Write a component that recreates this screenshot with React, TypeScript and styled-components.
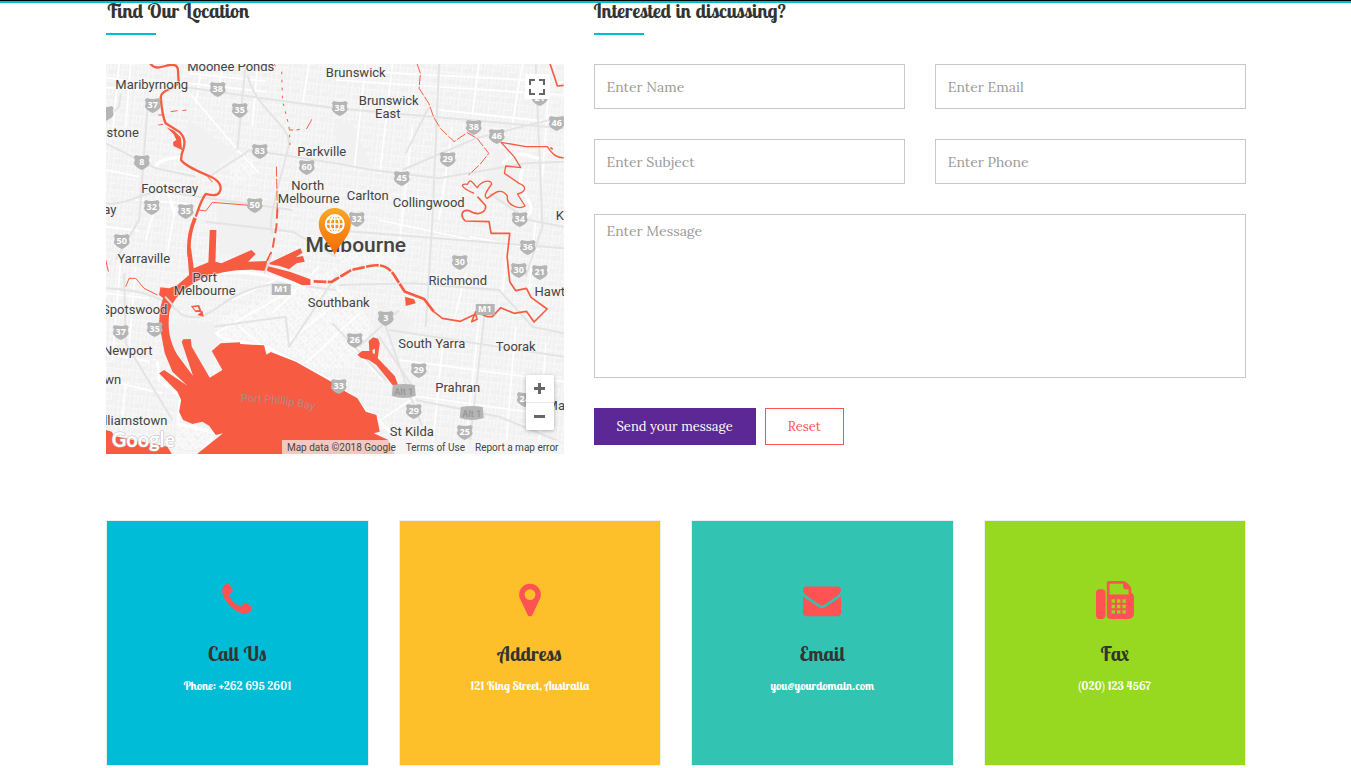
import React from "react";
import styled, { createGlobalStyle } from "styled-components";

const script = '"Lobster Two", Lobster, "Liberation Serif", serif';
const serif = 'Lora, "Liberation Serif", serif';

const GlobalStyle = createGlobalStyle`
  *, *::before, *::after { box-sizing: border-box; }
  body { margin: 0; background: #fff; color: #333; font-family: ${serif}; font-size: 14px; }
`;

const TopLine = styled.header`
  position: fixed;
  top: 0;
  left: 0;
  right: 0;
  z-index: 10;
  height: 3px;
  background: #00bcd7;
  border-top: 1px solid #000;
`;
const Container = styled.main`
  max-width: 1171px;
  margin: 0 auto;
  padding-left: 1px;
`;
const Row = styled.div`
  display: flex;
  flex-wrap: wrap;
`;
const Column = styled.section<{ $span: number }>`
  flex: 0 0 ${(p) => (p.$span * 100) / 12}%;
  min-width: 0;
  padding: 0 15px;
`;
const Title = styled.h2`
  margin: 0 0 29px;
  font: 700 20px/22px ${script};
  color: #333;
  white-space: nowrap;
  &::after {
    content: "";
    display: block;
    width: 50px;
    height: 2px;
    margin-top: 11px;
    background: #00bcd7;
  }
`;

/* Form */
const Form = styled.form`
  display: grid;
  grid-template-columns: 1fr 1fr;
  gap: 30px;
`;
const Label = styled.label<{ $wide?: boolean }>`
  display: block;
  min-width: 0;
  ${(p) => p.$wide && "grid-column: 1 / -1;"}
`;
const Hidden = styled.span`
  position: absolute;
  width: 1px;
  height: 1px;
  overflow: hidden;
  clip-path: inset(50%);
`;
const Input = styled.input`
  display: block;
  width: 100%;
  height: 45px;
  padding: 6px 12px;
  border: 1px solid #c8c8c8;
  border-radius: 0;
  font: 14px/20px ${serif};
  color: #333;
  &::placeholder { color: #999; opacity: 1; }
`;
const Message = styled(Input)`
  height: 164px;
  resize: none;
`;
const Actions = styled.div`
  grid-column: 1 / -1;
  display: flex;
  gap: 9px;
`;
const Button = styled.button<{ $outline?: boolean }>`
  height: 37px;
  padding: 0 22px;
  border: 1px solid ${(p) => (p.$outline ? "#ff5252" : "#5c2896")};
  background: ${(p) => (p.$outline ? "#fff" : "#5c2896")};
  color: ${(p) => (p.$outline ? "#ff5252" : "#fff")};
  font: 13px/20px ${serif};
  cursor: pointer;
`;

/* Contact cards */
const Cards = styled(Row)`
  margin-top: 66px;
  padding-bottom: 2px;
`;
const Card = styled.article<{ $color: string }>`
  display: flex;
  flex-direction: column;
  align-items: center;
  height: 246px;
  padding-top: 60px;
  border: 1px solid #eee;
  background: ${(p) => p.$color};
  text-align: center;
`;
const CardIcon = styled.svg`
  width: 38px;
  height: 38px;
  fill: #ff5252;
`;
const CardTitle = styled.h3`
  margin: 24px 0 10px;
  font: 700 20px/22px ${script};
  color: #333;
`;
const CardText = styled.p`
  margin: 0;
  font: 700 12px/22px ${script};
  color: #fff;
`;

/* Map */
const MapBox = styled.div`
  position: relative;
  height: 390px;
  overflow: hidden;
  background: #f2f2f2;
  font-family: Roboto, sans-serif;
`;
const MapSvg = styled.svg`
  display: block;
  width: 100%;
  height: 100%;
  font-family: Roboto, sans-serif;
`;
const MapButton = styled.button`
  display: flex;
  align-items: center;
  justify-content: center;
  width: 100%;
  padding: 0;
  border: 0;
  background: #fff;
  cursor: pointer;
`;
const Fullscreen = styled.div`
  position: absolute;
  top: 10px;
  right: 14px;
  width: 25px;
  ${MapButton} { height: 25px; }
`;
const Zoom = styled.div`
  position: absolute;
  right: 10px;
  bottom: 24px;
  width: 28px;
  border-radius: 2px;
  overflow: hidden;
  box-shadow: 0 1px 4px rgba(0, 0, 0, 0.3);
  ${MapButton} { height: 27px; }
  ${MapButton} + ${MapButton} { height: 28px; border-top: 1px solid #e6e6e6; }
`;
const Credits = styled.div`
  position: absolute;
  right: 0;
  bottom: 0;
  display: flex;
  gap: 10px;
  height: 14px;
  padding: 0 5px;
  background: rgba(245, 245, 245, 0.7);
  color: #444;
  font-size: 10px;
  line-height: 15px;
  white-space: nowrap;
  a { color: #444; text-decoration: none; }
`;

const WATER = "#f75c43";

type Place = [string, number, number];
const places: Place[] = [
  ["Moonee Ponds", 125, 7], ["Maribyrnong", 46, 25], ["Brunswick", 250, 13],
  ["Brunswick", 283, 41], ["East", 282, 54], ["stone", 17, 73], ["Parkville", 216, 92],
  ["Footscray", 64, 129], ["North", 202, 126], ["Melbourne", 203, 139],
  ["Carlton", 262, 136], ["Collingwood", 323, 143], ["ay", 4, 150], ["Yarraville", 38, 199],
  ["Port", 99, 218], ["Melbourne", 99, 231], ["Richmond", 352, 221], ["Southbank", 233, 243],
  ["Spotswood", 29, 250], ["Newport", 22, 291], ["wn", 7, 320], ["South Yarra", 326, 284],
  ["Toorak", 410, 287], ["Prahran", 352, 328], ["St Kilda", 306, 372], ["K", 454, 156],
  ["lliamstown", 30, 361], ["Hawt", 444, 232], ["Ma", 450, 346],
];
const shields: Place[] = [
  ["37", 47, 41], ["38", 112, 25], ["35", 134, 46], ["83", 154, 87], ["8", 36, 98],
  ["32", 46, 143], ["35", 80, 147], ["50", 149, 141], ["50", 16, 177], ["60", 201, 103],
  ["38", 234, 44], ["38", 368, 63], ["46", 391, 72], ["46", 451, 59], ["29", 342, 95],
  ["45", 296, 114], ["32", 251, 155], ["34", 414, 155], ["36", 422, 183], ["30", 354, 198],
  ["30", 413, 206], ["21", 434, 208], ["37", 15, 268], ["35", 49, 265], ["26", 249, 276],
  ["3", 280, 254], ["33", 233, 322], ["29", 313, 306], ["29", 308, 347], ["25", 359, 368],
  ["21", 434, 34], ["24", 419, 335], ["", 0, 49],
];
const plates: Place[] = [["M1", 175, 225], ["M1", 379, 245]];
const altPlates: Place[] = [["Alt 1", 298, 327], ["Alt 1", 366, 349]];

const minorRoads =
  "M0 52 L110 70 L240 80 M0 82 L120 88 M250 70 L480 95 M250 40 L480 64 M690 60 L1374 105 M690 30 L1374 66 M1000 150 L1374 190" +
  " M40 12 L20 230 M75 12 L60 200 M285 40 L270 130 M350 12 L340 90 M455 20 L440 200 M610 12 L590 130" +
  " M780 12 L745 330 M860 12 L822 340 M920 200 L880 560 M1120 12 L1100 160 M1250 12 L1220 190 M1330 80 L1310 350" +
  " M240 85 L400 275 L460 340 M0 330 L100 350 M90 420 L240 430 M160 400 L120 540 M0 500 L100 512 M210 440 L180 600" +
  " M1040 200 L1000 480 M1090 530 L1300 570 M1210 520 L1190 700 M1290 480 L1270 690 M820 480 L1100 540" +
  " M0 700 L130 715 M45 600 L20 900 M90 620 L70 860 M0 880 L130 905 M0 960 L170 1000 M60 970 L40 1170" +
  " M330 820 L560 690 M400 800 L640 1000 M500 760 L640 620 M540 850 L690 730 M600 910 L760 760 M380 720 L550 640" +
  " M880 900 L1374 965 M870 1000 L1300 1060 M1010 860 L980 1160 M1120 780 L1080 1150 M1230 800 L1200 1160 M1320 850 L1300 1160" +
  " M930 1010 L780 1110 M830 960 L720 840 M1080 640 L1040 800";
const majorRoads =
  "M0 175 L40 140 L45 100 M240 82 L690 145 L1374 205 M420 12 L395 270 M405 290 L430 270 L690 310 L800 330 L1000 355 L1260 310 L1374 305" +
  " M425 45 C450 150 550 190 550 250 C540 310 480 480 500 520 M0 250 L150 325 L270 350 M310 350 L410 285 M125 150 L100 480 L30 600" +
  " M0 430 C80 440 120 370 240 405 L560 450 M300 485 L560 515 L690 590 M680 510 L1374 565 M1000 12 L980 480 L960 800" +
  " M970 140 L900 280 M890 330 L1110 235 L1290 190 L1374 170 M1150 400 L1270 480 L1374 500 M1290 12 L1310 500 L1260 650" +
  " M0 685 C130 690 180 720 230 765 C330 800 330 690 520 670 L690 690 M700 675 L920 670 L1180 690 L1280 800 L1374 820" +
  " M55 640 L60 850 L200 1080 M325 800 L540 770 L550 860 L690 650 M830 770 L910 1000 L950 1100 M850 810 L1374 890" +
  " M930 1020 L1180 1070 L1374 1150 M840 960 L680 790 M760 860 L880 750 M1140 730 L1090 1170 M820 830 L920 980";

const globe = "M0 -9 V9 M-9 0 H9 M-7 -5 H7 M-7 5 H7 M0 -9 C-6 -5 -6 5 0 9 C6 5 6 -5 0 -9";

function CityMap() {
  return (
    <MapBox>
      <MapSvg viewBox="0 0 458 390" preserveAspectRatio="xMidYMid slice" role="img" aria-label="Map of Melbourne">
        <defs>
          <pattern id="blocks" width="46" height="38" patternUnits="userSpaceOnUse" patternTransform="rotate(6)">
            <path d="M0 5H46 M0 24H30 M8 0V38 M30 0V24 M40 5V38 M18 5V24" fill="none" stroke="#fafafa" strokeWidth="3" />
          </pattern>
          <pattern id="slant" width="30" height="26" patternUnits="userSpaceOnUse" patternTransform="rotate(-38)">
            <path d="M0 5H30 M8 0V26 M20 5V26 M0 17H20" fill="none" stroke="#fcfcfc" strokeWidth="3" />
          </pattern>
          <linearGradient id="pin" x1="0" y1="0" x2="0" y2="1">
            <stop offset="0" stopColor="#f9a72b" />
            <stop offset="1" stopColor="#f56a00" />
          </linearGradient>
        </defs>
        <rect width="458" height="390" fill="#f1f1f1" />

        <g transform="translate(0 -4) scale(0.33333)" fill="none" strokeLinejoin="round">
          <rect y="0" width="1374" height="1200" fill="url(#blocks)" />
          <path fill="#f1f1f1" d="M250 180 L390 275 L300 345 L235 300z M330 415 L520 450 L480 600 L340 580z M190 790 L320 790 L340 850 L300 940 L200 860z M684 190 L740 190 L800 320 L700 310z M1170 260 L1240 330 L1250 440 L1130 400z M820 730 L930 780 L880 850 L800 800z" />
          <path fill="url(#slant)" d="M350 770 L690 620 L800 800 L740 920 L640 930 L480 850 L345 840z M700 530 L880 560 L870 610 L700 610z M220 1070 L320 1110 L280 1170 L210 1170z M360 300 L440 290 L450 350 L380 370z" />
          <path stroke="#fff" strokeWidth="5" d={minorRoads} />
          <path stroke="#e4e4e4" strokeWidth="6" d={majorRoads} />
          <path stroke="#fff" strokeWidth="9" d="M265 660 C340 630 440 620 600 685 M330 815 C350 850 400 840 480 860 L690 970 L860 1120 M205 460 L190 400 M150 320 C160 290 210 300 235 285 M155 905 L160 960 L225 1010 L215 1090 L330 1120 L290 1170 M1190 310 C1250 260 1260 290 1300 295 M1250 330 C1220 400 1310 430 1260 470" />

          <g fill={WATER}>
            <path d="M244 565 L256 565 L264 625 L308 607 L312 510 L332 510 L329 605 L347 610 L437 570 L450 582 L427 605 L484 603 L480 633 C420 624 340 632 280 660 C235 685 195 720 190 765 C185 815 195 850 215 885 L262 948 L228 846 L232 838 L255 837 L258 860 L312 953 L350 930 L318 873 L345 850 L402 847 L404 852 L475 856 L482 884 L495 876 L570 905 L690 973 L720 995 L755 1015 L780 1055 L812 1065 L822 1115 L804 1120 L848 1140 L868 1185 L270 1185 L352 1120 L330 1125 L310 1097 L290 1085 L260 1092 L232 1080 L220 1055 L226 1020 L215 995 L160 940 L175 930 L245 977 L200 935 L177 880 L160 790 L163 745 L172 715 L160 705 L164 682 L190 685 L215 675 L250 645z" />
            <path d="M492 608 L584 565 L590 578 L570 592 L592 588 L597 605 L572 610 L550 628 L522 618 L490 613z M484 618 L552 635 L614 658 L614 675 L587 675 L567 665 L484 633z" />
            <path d="M0 1110 L18 1115 L25 1128 L185 1160 L200 1185 L0 1185z" />
            <path d="M182 202 L205 212 L225 232 L229 270 L203 258 L202 246 L212 240 L203 222z" />
            <path d="M789 843 L802 832 L817 836 L822 850 L816 895 L867 948 L877 975 L861 976 L812 915 L788 899 L766 894 L755 884 L769 873 L791 873z" />
            <path d="M255 738 L280 735 L288 755 L270 757z M275 765 L290 752 L294 770z M898 710 L925 718 L930 730 L900 738z" />
          </g>
          <path fill="#f1f1f1" d="M800 870 L808 866 L807 882 L801 880z M262 742 L276 740 L280 750 L269 751z" />

          <g stroke={WATER}>
            <path strokeWidth="7" d="M132 8 C145 30 165 22 185 16 C215 10 218 22 217 40 L219 68 C200 90 165 90 165 112 C168 150 172 175 180 190 L220 215 C242 235 238 255 228 282 L226 300 C240 320 280 335 310 348 C340 360 350 380 342 395 C335 410 315 405 300 402 C285 420 278 450 270 470" />
            <path strokeWidth="11" d="M268 474 C253 510 246 550 251 590" />
            <path strokeWidth="8" d="M624 664 L677 666 L712 645 L737 630 L792 618 C835 610 850 625 865 645 L898 697" strokeDasharray="38 4" />
            <path strokeWidth="8" d="M898 695 L955 717 L984 755" />
            <path strokeWidth="5" d="M984 755 L1010 775 L1064 784 L1110 762 L1114 778 L1098 785 L1110 755 L1145 770 L1160 770 L1185 743 L1225 760 L1262 754 L1285 786 L1324 747 L1276 712 L1262 685 L1230 692 L1212 665 L1204 590 L1212 520 L1156 520 L1150 485 L1079 483 C1060 465 1070 448 1090 452 C1130 475 1145 445 1138 435 L1115 410" />
            <path strokeWidth="4" d="M1105 400 C1060 380 1065 370 1085 373 C1095 350 1100 370 1115 383 C1125 365 1155 355 1158 372 C1145 390 1130 410 1145 415 C1165 400 1185 380 1205 408 C1200 435 1240 450 1258 438 L1235 402 C1260 395 1265 380 1240 370 L1196 340 L1200 318 L1245 323 L1225 290 L1186 247 L1260 260 L1325 260 C1340 285 1355 295 1374 293" />
            <path strokeWidth="3" strokeDasharray="30 5" d="M934 12 L944 40 L940 85 L969 130 L984 172 L1004 205 L1045 245 L1084 218 L1114 235 L1149 280 L1124 312 L1089 345" />
            <path strokeWidth="3" strokeDasharray="8 16" d="M505 12 L515 30 M528 35 L530 120 L550 200 L553 255" />
            <path strokeWidth="3" strokeDasharray="30 6" d="M512 320 L515 460" />
            <path strokeWidth="6" strokeDasharray="30 14" d="M515 446 L512 500 L504 545 L500 570 L485 600 L482 620" />
            <path strokeWidth="3" d="M195 155 L215 152 M230 152 L242 150 M280 450 L300 453 L320 427 L430 436 M550 210 L562 210 M572 210 L582 208 M602 207 L612 190 L618 178 M158 165 L170 165 M158 195 L172 193 M60 680 L70 655 L90 655 L115 685 L155 705 M0 600 L8 635 M305 350 L320 366" />
            <path strokeWidth="5" d="M1333 12 L1346 50 L1355 78 L1374 76 M1334 262 L1341 268" />
          </g>
          <path stroke="#ddd" strokeWidth="6" d="M178 710 L205 740 M497 585 L476 640" />
        </g>

        <g fill="#b5b5b5">
          {shields.map(([n, x, y], i) => (
            <path key={i} transform={`translate(${x} ${y})`} d="M-6 -7 Q0 -5 6 -7 L8 -5 Q6 -2 8 1 Q7 5 0 8 Q-7 5 -8 1 Q-6 -2 -8 -5z" />
          ))}
          {plates.map(([n, x, y], i) => <rect key={i} x={x - 9} y={y - 5} width="19" height="11" />)}
          {altPlates.map(([n, x, y], i) => (
            <path key={i} transform={`translate(${x} ${y})`} d="M-11 -6 Q0 -8 11 -6 L12 5 Q0 9 -12 5z" />
          ))}
        </g>
        <g fill="#fff" fontSize="9" fontWeight="700" textAnchor="middle" fontFamily="'Open Sans', sans-serif">
          {[...shields, ...plates].map(([n, x, y], i) => <text key={i} x={x} y={y + 3}>{n}</text>)}
        </g>
        <g fill="#999" fontSize="9" fontWeight="700" textAnchor="middle">
          {altPlates.map(([n, x, y], i) => <text key={i} x={x} y={y + 4}>{n}</text>)}
        </g>

        <g fill="#444" fontSize="13" textAnchor="middle" stroke="#f5f5f5" strokeWidth="2" strokeOpacity="0.6" paintOrder="stroke">
          {places.map(([n, x, y], i) => <text key={i} x={x} y={y}>{n}</text>)}
          <text x="250" y="188" fontSize="21" fontWeight="500">Melbourne</text>
        </g>
        <path id="bay" d="M135 338 Q180 338 215 348" fill="none" />
        <text fill="#b08a80" fontSize="11"><textPath href="#bay">Port Phillip Bay</textPath></text>
        <text x="6" y="383" fill="#fff" stroke="#bbb" strokeWidth="1" paintOrder="stroke" fontSize="20" fontWeight="700" fontFamily="Lato, sans-serif">Google</text>

        <g transform="translate(229 160)">
          <path fill="url(#pin)" d="M0 31 C-3 21 -16 13 -16 0 A16 16 0 0 1 16 0 C16 13 3 21 0 31z" />
          <g fill="none" stroke="#fff" strokeWidth="1.5">
            <circle r="9" strokeWidth="2" />
            <path d={globe} />
          </g>
        </g>
      </MapSvg>

      <Fullscreen>
        <MapButton type="button" aria-label="Toggle fullscreen">
          <svg width="16" height="16" viewBox="0 0 16 16" fill="none" stroke="#666" strokeWidth="2">
            <path d="M1 6V1H6 M10 1H15V6 M15 10V15H10 M6 15H1V10" />
          </svg>
        </MapButton>
      </Fullscreen>
      <Zoom>
        <MapButton type="button" aria-label="Zoom in">
          <svg width="11" height="11" viewBox="0 0 11 11" stroke="#666" strokeWidth="3"><path d="M0 5.500H11M5.500 0V11" /></svg>
        </MapButton>
        <MapButton type="button" aria-label="Zoom out">
          <svg width="11" height="11" viewBox="0 0 11 11" stroke="#666" strokeWidth="3"><path d="M0 5.500H11" /></svg>
        </MapButton>
      </Zoom>
      <Credits>
        <span>Map data ©2018 Google</span>
        <a href="#terms">Terms of Use</a>
        <a href="#report">Report a map error</a>
      </Credits>
    </MapBox>
  );
}

const icons = {
  phone:
    "M1600 1240q0 27-10 70.500t-21 68.500q-21 50-122 106-94 51-186 51-27 0-53-3.500t-57.500-12.500-47-14.500-55.500-20.500-49-18q-98-35-175-83-127-79-264-216t-216-264q-48-77-83-175-3-9-18-49t-20.500-55.500-14.500-47-12.500-57.500-3.500-53q0-92 51-186 56-101 106-122 25-11 68.500-21t70.500-10q14 0 21 3 18 6 53 76 11 19 30 54t35 63.500 31 53.500q3 4 17.500 25t21.500 35.500 7 28.500q0 20-28.500 50t-62 55-62 53-28.500 46q0 9 5 22.500t8.500 20.500 14 24 11.500 19q76 137 174 235t235 174q2 1 19 11.500t24 14 20.500 8.500 22.500 5q18 0 46-28.500t53-62 55-62 50-28.500q14 0 28.500 7t35.500 21.500 25 17.500q25 15 53.500 31t63.500 35 54 30q70 35 76 53 3 7 3 21z",
  marker:
    "M1152 640q0-106-75-181t-181-75-181 75-75 181 75 181 181 75 181-75 75-181zm256 0q0 109-33 179l-364 774q-16 33-47.500 52t-67.500 19-67.500-19-46.500-52l-365-774q-33-70-33-179 0-212 150-362t362-150 362 150 150 362z",
  envelope:
    "M1792 710v794q0 66-47 113t-113 47h-1472q-66 0-113-47t-47-113v-794q44 49 101 87 362 246 497 345 57 42 92.500 65.500t94.500 48 110 24.500h2q51 0 110-24.500t94.500-48 92.500-65.500q170-123 498-345 57-39 100-87zm0-294q0 79-49 151t-122 123q-376 261-468 325-10 7-42.500 31t-54 38.500-52 32.500-57.500 27-50 9h-2q-23 0-50-9t-57.500-27-52-32.500-54-38.500-42.500-31q-91-64-262-182.500t-205-142.500q-62-42-117-115.500t-55-136.500q0-78 41.500-130t118.500-52h1472q65 0 112.500 47t47.500 113z",
  fax:
    "M288 384q66 0 113 47t47 113v1088q0 66-47 113t-113 47h-128q-66 0-113-47t-47-113v-1088q0-66 47-113t113-47zM1664 549q58 34 93 93t35 126v768q0 106-75 181t-181 75h-864q-66 0-113-47t-47-113v-1536q0-40 28-68t68-28h672q40 0 88 20t76 48l152 152q28 28 48 76t20 88zM640 128v512h896v-256h-160q-40 0-68-28t-28-68v-160zM736 864v160h160v-160zM992 864v160h160v-160zM1248 864v160h160v-160zM736 1120v160h160v-160zM992 1120v160h160v-160zM1248 1120v160h160v-160zM736 1376v160h160v-160zM992 1376v160h160v-160zM1248 1376v160h160v-160z",
};

const contacts = [
  { title: "Call Us", text: "Phone: +262 695 2601", color: "#00bcd7", icon: icons.phone },
  { title: "Address", text: "121 King Street, Australia", color: "#fdc02b", icon: icons.marker },
  { title: "Email", text: "you@yourdomain.com", color: "#32c3b2", icon: icons.envelope },
  { title: "Fax", text: "(020) 123 4567", color: "#96d920", icon: icons.fax },
];

export default function App() {
  return (
    <>
      <GlobalStyle />
      <TopLine />
      <Container>
        <Row>
          <Column $span={5}>
            <Title>Find Our Location</Title>
            <CityMap />
          </Column>
          <Column $span={7}>
            <Title>Interested in discussing?</Title>
            <Form onSubmit={(e) => e.preventDefault()}>
              {["Name", "Email", "Subject", "Phone"].map((name) => (
                <Label key={name}>
                  <Hidden>{name}</Hidden>
                  <Input name={name.toLowerCase()} placeholder={`Enter ${name}`} />
                </Label>
              ))}
              <Label $wide>
                <Hidden>Message</Hidden>
                <Message as="textarea" name="message" placeholder="Enter Message" />
              </Label>
              <Actions>
                <Button type="submit">Send your message</Button>
                <Button type="reset" $outline>Reset</Button>
              </Actions>
            </Form>
          </Column>
        </Row>
        <Cards>
          {contacts.map((c) => (
            <Column key={c.title} $span={3}>
              <Card $color={c.color}>
                <CardIcon viewBox="0 0 1792 1792" aria-hidden="true">
                  <path fillRule="evenodd" d={c.icon} />
                </CardIcon>
                <CardTitle>{c.title}</CardTitle>
                <CardText>{c.text}</CardText>
              </Card>
            </Column>
          ))}
        </Cards>
      </Container>
    </>
  );
}
